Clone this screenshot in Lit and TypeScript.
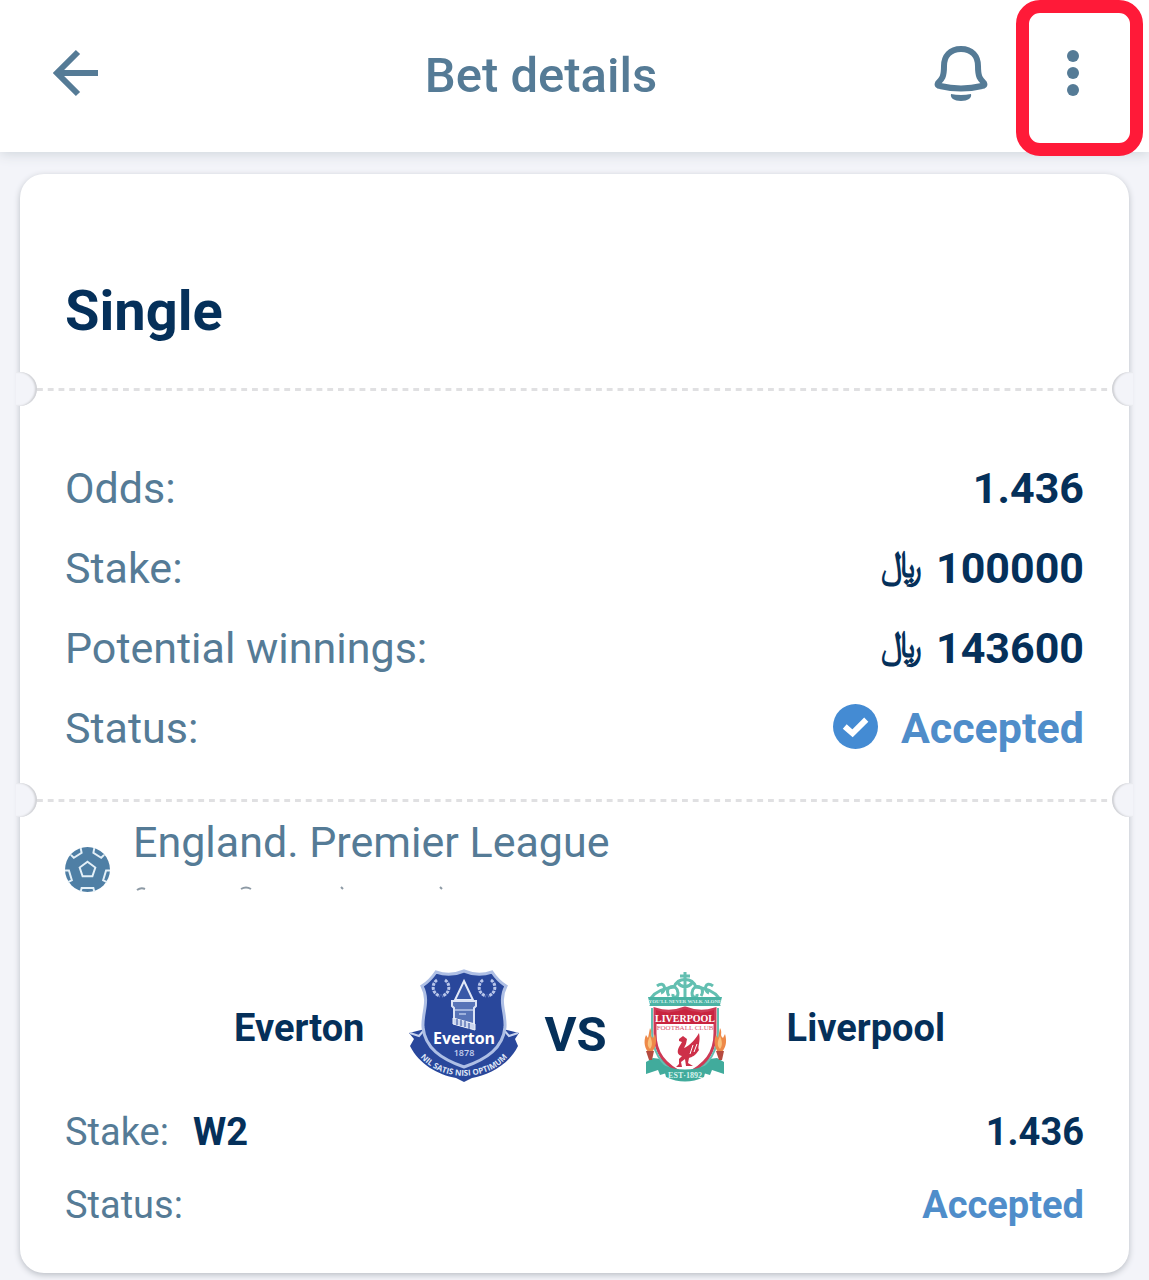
import { LitElement, html, svg, css } from "lit";
import { customElement, property } from "lit/decorators.js";

const laurel = (cx: number) => svg`
  <path d="M${cx - 4} 11 C${cx - 10} 15 ${cx - 9} 25 ${cx - 1} 27 M${cx + 4} 11 C${cx + 10} 15 ${cx + 9} 25 ${cx + 1} 27"
    fill="none" stroke="#b9c6ea" stroke-width="3" stroke-dasharray="3 1" />`;

@customElement("everton-crest")
export class EvertonCrest extends LitElement {
  static styles = css`
    :host { display: block; }
    .art { display: block; width: 112px; height: 114px; }
    .name { font: 700 16px "Open Sans", "Noto Sans", sans-serif; fill: #fff; }
    .year { font: 600 9px "Open Sans", "Noto Sans", sans-serif; fill: #c5d0ee; }
    .motto { font: 700 8px "Open Sans", "Noto Sans", sans-serif; fill: #dfe6f7; }
  `;
  render() {
    return html`
      <svg class="art" viewBox="0 0 112 114" role="img" aria-label="Everton crest">
        <path d="M1 64 L17 60 L20 68 C34 104 78 104 92 68 L95 60 L111 64 L107 70 L110 77
          C100 97 80 106 64 109 L56 113 L48 109 C30 106 11 95 2 77 L6 70 Z" fill="#29479b" />
        <path d="M2 64 L11 67 L17 60 M110 64 L101 67 L95 60" fill="none" stroke="#c8d3ee" stroke-width="2" />
        <path d="M28 3 Q42 8 56 2 Q70 8 84 3 Q90 12 98 17 C90 32 98 44 97 58 C95 79 79 90 56 98
          C33 90 17 79 15 58 C14 44 22 32 14 17 Q22 12 28 3 Z" fill="#29479b" stroke="#aebfe5" stroke-width="3" />
        ${laurel(33)} ${laurel(79)}
        <path d="M56 12 L65 31 H47 Z" fill="#3958a7" stroke="#e3e9f7" stroke-width="2" />
        <path d="M44 32 H68 V37 L66 39 V58 L46 50 V39 L44 37 Z" fill="#5874b7" stroke="#dbe3f5" stroke-width="2" />
        <path d="M47 41 H65 M51 45 H58" stroke="#9eb1dc" stroke-width="2" />
        <path d="M45 49 L67 55 V61 L45 55 Z" fill="#cbd6ee" stroke="#eef2fb" />
        <path d="M49 50 V56 M53 51 V57 M57 52 V58 M61 54 V60" stroke="#29479b" />
        <text class="name" x="56" y="75" text-anchor="middle">Everton</text>
        <text class="year" x="56" y="87" text-anchor="middle">1878</text>
        <path id="ribbon" d="M5 76 C22 117 90 117 107 76" fill="none" />
        <text class="motto"><textPath href="#ribbon" startOffset="50%" text-anchor="middle">NIL SATIS NISI OPTIMUM</textPath></text>
      </svg>`;
  }
}

@customElement("liverpool-crest")
export class LiverpoolCrest extends LitElement {
  static styles = css`
    :host { display: block; }
    .art { display: block; width: 84px; height: 114px; }
    .name { font: 700 10px "Liberation Serif", serif; fill: #fff; }
    .club { font: 400 7px "Liberation Serif", serif; fill: #d9546c; }
    .anthem { font: 700 5px "Liberation Serif", serif; fill: #d9f2ed; }
    .year { font: 700 8px "Liberation Serif", serif; fill: #d9f2ed; }
  `;
  render() {
    const flame = (x: number) => svg`
      <g transform="translate(${x} 0)">
        <path d="M5 59 C8 64 4 66 8 69 L10 65 C13 75 9 81 6 84 H4 C0 80 -2 73 1 66 L3 69 Z" fill="#ee8948" />
        <path d="M5 67 C7 72 8 76 5 80 C2 77 2 73 5 67 Z" fill="#f8c27c" />
        <path d="M1 82 H9 L7 91 H4 Z" fill="#b54a3f" />
      </g>`;
    return html`
      <svg class="art" viewBox="0 0 84 114" role="img" aria-label="Liverpool crest">
        <g fill="none" stroke="#63bfb1" stroke-width="3">
          <path d="M8 29 C13 22 22 19 31 18 C35 8 49 8 53 18 C62 19 71 22 76 29" />
          <path d="M14 17 C22 11 24 22 18 24 M70 17 C62 11 60 22 66 24" />
          <path d="M26 27 C20 17 34 13 35 24 C35 30 29 29 30 25 M58 27 C64 17 50 13 49 24 C49 30 55 29 54 25" />
          <path d="M42 3 V28 M37 7 H47 M35 14 C39 19 45 19 49 14" />
        </g>
        <path d="M5 28 H79 L77 36 L78 37 H6 L7 36 Z" fill="#4bb3a4" />
        <text class="anthem" x="42" y="34" text-anchor="middle">YOU'LL NEVER WALK ALONE</text>
        <path d="M3 93 L10 89 L26 91 L34 101 L17 106 L15 101 L3 105 Z M81 93 L74 89 L58 91 L50 101 L67 106 L69 101 L81 105 Z" fill="#41ab9c" />
        <path d="M12 40 Q27 45 42 39 Q57 45 72 40 V64 C72 84 63 96 42 106 C21 96 12 84 12 64 Z" fill="#fff" stroke="#cd3a55" stroke-width="3" />
        <path d="M13 41 Q27 46 42 40 Q57 46 71 41 V55 H13 Z" fill="#c9243f" />
        <path d="M9 39 V62 C9 85 20 97 34 104 M75 39 V62 C75 85 64 97 50 104" fill="none" stroke="#65beb1" stroke-width="2" />
        <text class="name" x="42" y="53" text-anchor="middle">LIVERPOOL</text>
        <text class="club" x="42" y="61" text-anchor="middle">FOOTBALL CLUB</text>
        <path d="M36 70 L40 67 L44 70 L43 75 L41 79 C44 78 51 73 56 64 C58 73 54 78 56 81
          C52 87 49 88 46 89 L45 94 L50 97 H43 L42 90 L38 93 L39 98 H33 L36 95 V90 L39 87
          C34 86 34 82 36 78 L39 73 L36 72 Z" fill="#cd3049" />
        <path d="M50 76 L47 85 M54 75 L51 83" stroke="#fff" />
        <path d="M20 96 Q42 105 64 96 L61 108 Q42 117 23 108 Z" fill="#41ab9c" />
        <text class="year" x="42" y="109" text-anchor="middle">EST·1892</text>
        ${flame(2)} ${flame(72)}
      </svg>`;
  }
}

@customElement("ticket-divider")
export class TicketDivider extends LitElement {
  static styles = css`
    :host { display: flex; align-items: center; height: 34px; margin: 0 -4px; }
    .notch { width: 21px; height: 34px; background: #f3f4f9; }
    .left { border-radius: 0 17px 17px 0; box-shadow: inset -2px 0 2px #cfd0d4; }
    .right { border-radius: 17px 0 0 17px; box-shadow: inset 2px 0 2px #cfd0d4; }
    .line {
      flex: 1; height: 3px;
      background: linear-gradient(to right, #e0e0e2 50%, transparent 50%) 0 0 / 1% 100%;
    }
  `;
  render() {
    return html`<span class="notch left"></span><span class="line"></span><span class="notch right"></span>`;
  }
}

@customElement("detail-row")
export class DetailRow extends LitElement {
  @property() label = "";
  @property() pick = "";
  static styles = css`
    :host {
      display: flex; align-items: center; justify-content: space-between;
      height: 80px; font-size: 43px; color: #557b96;
    }
    :host([compact]) { height: 73px; font-size: 38px; }
    .pick { margin-left: 24px; font-weight: 700; color: #05305a; }
    .value { display: flex; align-items: center; font-weight: 700; color: #05305a; }
  `;
  render() {
    return html`
      <span>${this.label}${this.pick ? html`<span class="pick">${this.pick}</span>` : ""}</span>
      <span class="value"><slot></slot></span>`;
  }
}

@customElement("app-root")
export class AppRoot extends LitElement {
  static styles = css`
    :host {
      display: block; min-height: 100vh; overflow: hidden;
      background: #f3f4f9; font-family: Roboto, "Liberation Sans", sans-serif;
    }
    .bar {
      position: relative; display: flex; align-items: stretch; height: 152px;
      background: #fff; color: #557b96; box-shadow: 0 2px 12px #cfd5db;
    }
    .title { flex: 1; margin: 0; font-size: 49px; font-weight: 500; line-height: 152px; text-align: center; }
    .tool {
      display: flex; align-items: center; justify-content: center; height: 146px;
      padding: 0; border: 0; background: none; color: inherit;
    }
    .back { width: 152px; }
    .bell { width: 62px; }
    .menu { position: relative; width: 114px; margin: 0 19px 0 24px; }
    .marker {
      position: absolute; top: 0; left: 0; box-sizing: border-box;
      width: 127px; height: 156px; border: 13px solid #ff1a38; border-radius: 24px;
    }
    .card {
      margin: 22px 20px 7px; border-radius: 24px; background: #fff;
      box-shadow: 0 2px 6px #b9bdc4;
    }
    .kind { margin: 0; padding: 97px 45px 21px; font-size: 56px; font-weight: 700; line-height: 80px; color: #05305a; }
    .summary { padding: 42px 45px 15px; }
    .event { padding: 0 45px 32px; }
    .rial { margin: 0 14px 8px 0; font-size: 37px; }
    .ok { width: 45px; height: 45px; margin: 0 23px 3px 0; }
    .accepted { color: #4f8dca; }
    .league { display: flex; color: #557b96; }
    .ball { width: 45px; height: 45px; margin: 30px 23px 0 0; }
    .league-name { margin: 0; font-size: 43px; font-weight: 400; line-height: 50px; }
    .remnant { display: block; width: 320px; height: 6px; margin-top: 18px; }
    .match {
      display: flex; align-items: center; justify-content: center;
      margin: 77px 0 12px; padding-left: 30px; color: #05305a;
    }
    .team { margin-top: 4px; font-size: 38px; font-weight: 700; }
    .home { margin-right: 44px; }
    .away { margin-left: 60px; }
    .versus { margin: 16px 36px 0 24px; font-size: 49px; font-weight: 700; text-transform: uppercase; }
  `;

  render() {
    return html`
      <header class="bar">
        <button class="tool back" aria-label="Back">
          <svg width="46" height="48" viewBox="0 0 46 48" fill="none" stroke="currentColor" stroke-width="6">
            <path d="M25 3 L4 24 L25 45 M4 24 H45" />
          </svg>
        </button>
        <h1 class="title">Bet details</h1>
        <button class="tool bell" aria-label="Notifications">
          <svg width="54" height="56" viewBox="0 0 54 56">
            <path d="M27 4 C16 4 10 11 10 21 C10 32 8 34 4 38 C3 40 4 41 6 41 Q27 46 48 41 C50 41 51 40 50 38 C46 34 44 32 44 21 C44 11 38 4 27 4 Z"
              fill="none" stroke="currentColor" stroke-width="6" stroke-linejoin="round" />
            <path d="M17 49 Q27 51 37 49 C38 53 34 56 27 56 C20 56 16 53 17 49 Z" fill="currentColor" />
          </svg>
        </button>
        <button class="tool menu" aria-label="More options">
          <svg width="12" height="48" viewBox="0 0 12 48" fill="currentColor">
            <circle cx="6" cy="7" r="6" /><circle cx="6" cy="24" r="6" /><circle cx="6" cy="41" r="6" />
          </svg>
          <span class="marker"></span>
        </button>
      </header>
      <main class="card">
        <h2 class="kind">Single</h2>
        <ticket-divider></ticket-divider>
        <section class="summary">
          <detail-row label="Odds:">1.436</detail-row>
          <detail-row label="Stake:"><span class="rial">﷼</span>100000</detail-row>
          <detail-row label="Potential winnings:"><span class="rial">﷼</span>143600</detail-row>
          <detail-row label="Status:">
            <svg class="ok" viewBox="0 0 46 46">
              <circle cx="23" cy="23" r="23" fill="#448bd3" />
              <path d="M12 23 L20 30 L34 16" fill="none" stroke="#fff" stroke-width="6" />
            </svg>
            <span class="accepted">Accepted</span>
          </detail-row>
        </section>
        <ticket-divider></ticket-divider>
        <section class="event">
          <div class="league">
            <svg class="ball" viewBox="0 0 46 46">
              <circle cx="23" cy="23" r="23" fill="#4f7fa5" />
              <g fill="none" stroke="#e4f0f8" stroke-width="2">
                <path d="M23 15 L31 21 L28 30 H18 L15 21 Z" />
                <path d="M6 8 L9 11 L17 6 L16 1 M40 8 L37 11 L29 6 L30 1 M0 24 L4 24 L7 34 L3 36 M46 24 L42 24 L39 34 L43 36 M16 46 L17 42 H29 L30 46" />
              </g>
            </svg>
            <div>
              <h3 class="league-name">England. Premier League</h3>
              <svg class="remnant" viewBox="0 0 320 6" fill="none" stroke="#8d9aa5" stroke-width="2">
                <path d="M4 5 Q8 2 12 4 M108 4 Q113 1 118 4 M208 2 L210 4 M307 2 L309 4" />
              </svg>
            </div>
          </div>
          <div class="match">
            <span class="team home">Everton</span>
            <everton-crest></everton-crest>
            <span class="versus">vs</span>
            <liverpool-crest></liverpool-crest>
            <span class="team away">Liverpool</span>
          </div>
          <detail-row compact label="Stake:" pick="W2">1.436</detail-row>
          <detail-row compact label="Status:"><span class="accepted">Accepted</span></detail-row>
        </section>
      </main>
    `;
  }
}
